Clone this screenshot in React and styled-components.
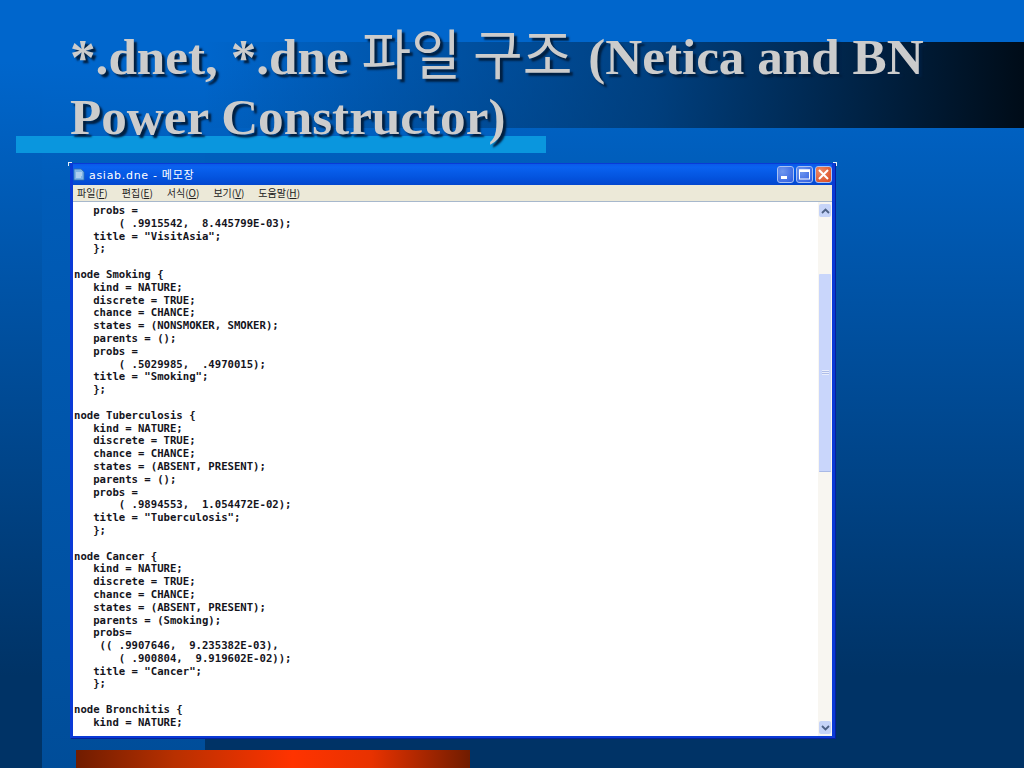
import React from "react";
import styled, { createGlobalStyle } from "styled-components";

const lines = `   probs =
       ( .9915542,  8.445799E-03);
   title = "VisitAsia";
   };

node Smoking {
   kind = NATURE;
   discrete = TRUE;
   chance = CHANCE;
   states = (NONSMOKER, SMOKER);
   parents = ();
   probs =
       ( .5029985,  .4970015);
   title = "Smoking";
   };

node Tuberculosis {
   kind = NATURE;
   discrete = TRUE;
   chance = CHANCE;
   states = (ABSENT, PRESENT);
   parents = ();
   probs =
       ( .9894553,  1.054472E-02);
   title = "Tuberculosis";
   };

node Cancer {
   kind = NATURE;
   discrete = TRUE;
   chance = CHANCE;
   states = (ABSENT, PRESENT);
   parents = (Smoking);
   probs=
    (( .9907646,  9.235382E-03),
       ( .900804,  9.919602E-02));
   title = "Cancer";
   };

node Bronchitis {
   kind = NATURE;`;

const menus = [
  ["파일", "F"],
  ["편집", "E"],
  ["서식", "O"],
  ["보기", "V"],
  ["도움말", "H"],
];

function App() {
  return (
    <Slide>
      <GlobalStyle />
      <Title>
        *.dnet, *.dne <Hangul>파일 구조</Hangul> (Netica and BN
        <br />
        Power Constructor)
      </Title>
      <Window>
        <Corner />
        <Corner $right />
        <TitleBar>
          <AppIcon viewBox="0 0 12 13">
            <path d="M1 1h7l3 3v8H1z" fill="#7fb4e6" stroke="#2f6fb0" strokeWidth="0.8" />
            <path d="M3 5h6M3 7h6M3 9h5" stroke="#e6f2fb" strokeWidth="0.9" />
          </AppIcon>
          <Caption>asiab.dne - 메모장</Caption>
          <Controls>
            <ControlButton>
              <svg width="9" height="9" viewBox="0 0 9 9">
                <rect x="0" y="6" width="6" height="3" fill="#fff" />
              </svg>
            </ControlButton>
            <ControlButton>
              <svg width="11" height="11" viewBox="0 0 11 11">
                <rect x="0.5" y="1" width="10" height="9" fill="none" stroke="#fff" />
                <rect x="0" y="0.5" width="11" height="2.5" fill="#fff" />
              </svg>
            </ControlButton>
            <ControlButton $close>
              <svg width="11" height="11" viewBox="0 0 11 11">
                <path d="M1 1l9 9M10 1l-9 9" stroke="#fff" strokeWidth="2" />
              </svg>
            </ControlButton>
          </Controls>
        </TitleBar>
        <MenuBar>
          {menus.map(([label, key]) => (
            <MenuItem key={key}>
              {label}(<u>{key}</u>)
            </MenuItem>
          ))}
        </MenuBar>
        <Body>
          <Code>{lines}</Code>
          <ScrollBar>
            <ScrollButton>
              <svg width="9" height="6" viewBox="0 0 9 6">
                <path d="M1 5l3.5-3.5L8 5" fill="none" stroke="#4d6185" strokeWidth="1.8" />
              </svg>
            </ScrollButton>
            <Thumb>
              <Grip />
            </Thumb>
            <ScrollButton $bottom>
              <svg width="9" height="6" viewBox="0 0 9 6">
                <path d="M1 1l3.5 3.5L8 1" fill="none" stroke="#4d6185" strokeWidth="1.8" />
              </svg>
            </ScrollButton>
          </ScrollBar>
        </Body>
      </Window>
      <RedBar />
    </Slide>
  );
}

const GlobalStyle = createGlobalStyle`
  body {
    margin: 0;
    background: #003366;
  }
`;

const Slide = styled.div`
  width: 1024px;
  height: 768px;
  overflow: hidden;
  display: flex;
  flex-direction: column;
  background-color: #003366;
  background-repeat: no-repeat;
  background-image:
    linear-gradient(#0a96de, #0a96de),
    linear-gradient(90deg, rgba(0, 102, 204, 0) 0%, rgba(0, 51, 102, 0.75) 55%, #000c18 100%),
    linear-gradient(#0066cc 0%, #0066cc 8%, #005cb8 25%, #004d99 100%),
    linear-gradient(#0066cc 0%, #0066cc 8%, #003366 88%, #003366 100%);
  background-size:
    530px 17px,
    820px 86px,
    163px 768px,
    1024px 768px;
  background-position:
    16px 136px,
    204px 42px,
    42px 0,
    0 0;
`;

const Title = styled.h1`
  margin: 27px 0 0 70px;
  height: 136px;
  font-family: "Liberation Serif", "Noto Sans CJK KR", serif;
  font-size: 51.2px;
  line-height: 60px;
  font-weight: 700;
  color: #cccccc;
  white-space: nowrap;
  text-shadow: 3px 3px 2px #001f40;
`;

const Hangul = styled.span`
  font-family: "Noto Sans CJK KR", sans-serif;
  font-weight: 400;
  font-size: 54px;
  line-height: 50px;
  vertical-align: -1px;
  margin-right: 3px;
`;

const Window = styled.div`
  position: relative;
  width: 765px;
  height: 575px;
  margin-left: 70px;
  box-sizing: border-box;
  display: flex;
  flex-direction: column;
  background: #0831d9;
  border: solid #0a3ad6;
  border-width: 1px 3px 2px 3px;
  box-shadow: 1px 1px 0 #06209c;
`;

const Corner = styled.span`
  position: absolute;
  top: -2px;
  ${(props) => (props.$right ? "right: -5px;" : "left: -5px;")}
  width: 3px;
  height: 3px;
  border-top: 1px solid #e8eef8;
  ${(props) =>
    props.$right ? "border-right: 1px solid #e8eef8;" : "border-left: 1px solid #e8eef8;"}
`;

const TitleBar = styled.div`
  height: 21px;
  flex: none;
  display: flex;
  align-items: center;
  background: linear-gradient(#0a5ae8 0%, #0a62f0 15%, #0455e0 60%, #0347cf 100%);
`;

const AppIcon = styled.svg`
  width: 12px;
  height: 13px;
  flex: none;
`;

const Caption = styled.span`
  margin: -2px 0 0 4px;
  font-family: "DejaVu Sans", "Noto Sans CJK KR", sans-serif;
  font-size: 11px;
  letter-spacing: 0.7px;
  color: #ffffff;
`;

const Controls = styled.div`
  margin-left: auto;
  display: flex;
  gap: 2px;
`;

const ControlButton = styled.div`
  width: 17px;
  height: 17px;
  box-sizing: border-box;
  display: flex;
  align-items: center;
  justify-content: center;
  border: 1px solid #a9c1f2;
  border-radius: 3px;
  background: ${(props) =>
    props.$close
      ? "radial-gradient(circle at 30% 30%, #ee8a66, #d8471e)"
      : "radial-gradient(circle at 30% 30%, #6f97ee, #2c5be0)"};
`;

const MenuBar = styled.div`
  height: 17px;
  flex: none;
  display: flex;
  align-items: center;
  gap: 14px;
  padding: 0 0 1px 4px;
  box-sizing: border-box;
  background: #ece9d8;
  border-bottom: 1px solid #a7b8cc;
`;

const MenuItem = styled.span`
  font-family: "Noto Sans CJK KR", "Noto Sans", sans-serif;
  font-size: 10px;
  color: #222222;
  white-space: nowrap;
`;

const Body = styled.div`
  flex: 1;
  min-height: 0;
  display: flex;
  background: #ffffff;
`;

const Code = styled.pre`
  flex: 1;
  margin: 0;
  padding: 3px 0 0 1px;
  overflow: hidden;
  font-family: "DejaVu Sans Mono", "Liberation Mono", monospace;
  font-size: 10.63px;
  font-weight: 700;
  line-height: 12.8px;
  color: #14141c;
`;

const ScrollBar = styled.div`
  width: 14px;
  flex: none;
  display: flex;
  flex-direction: column;
  align-items: center;
  background: #f8f6f1;
`;

const ScrollButton = styled.div`
  width: 12px;
  height: 13px;
  flex: none;
  margin: ${(props) => (props.$bottom ? "auto 0 2px" : "2px 0 0")};
  display: flex;
  align-items: center;
  justify-content: center;
  border-radius: 2px;
  background: #c6d4f8;
`;

const Thumb = styled.div`
  width: 12px;
  height: 197px;
  margin-top: 57px;
  display: flex;
  align-items: center;
  justify-content: center;
  background: #c9d6fb;
  border-radius: 1px;
  border-bottom: 1px solid #a9b9e6;
`;

const Grip = styled.div`
  width: 7px;
  height: 5px;
  background: repeating-linear-gradient(#e9eefc 0 1px, #aebde8 1px 2px);
`;

const RedBar = styled.div`
  width: 394px;
  height: 18px;
  margin: 12px 0 0 76px;
  flex: none;
  background: linear-gradient(90deg, #701c00 0%, #b83000 25%, #ff3300 55%, #e83200 75%, #701c00 100%);
`;

export default App;
